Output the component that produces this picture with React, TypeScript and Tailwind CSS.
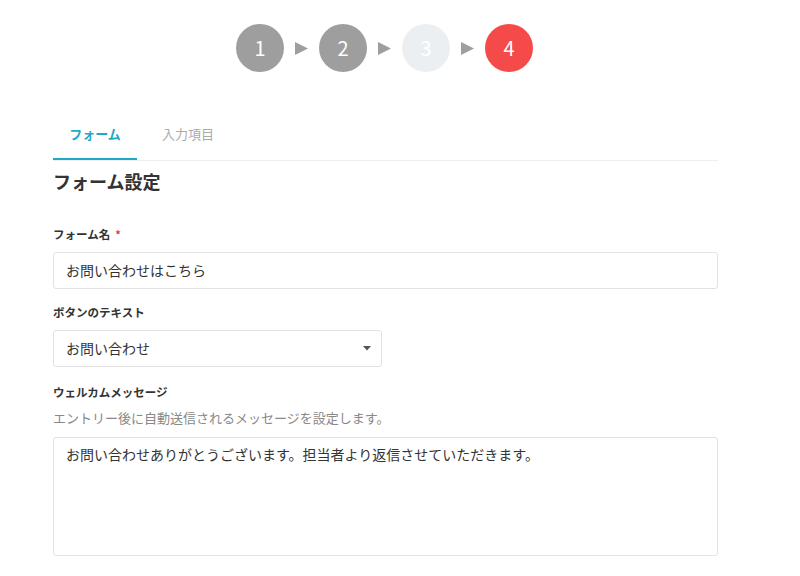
import { ChangeEvent, useState } from "react";

const font = { fontFamily: '"Noto Sans CJK JP", "Noto Sans", sans-serif' };

type StepState = "done" | "pending" | "current";

const steps: { label: string; state: StepState }[] = [
  { label: "1", state: "done" },
  { label: "2", state: "done" },
  { label: "3", state: "pending" },
  { label: "4", state: "current" },
];

function StepCircle({ label, state }: { label: string; state: StepState }) {
  const color =
    state === "current"
      ? "bg-[#f44a4a]"
      : state === "done"
      ? "bg-[#9e9e9e]"
      : "bg-[#eceff1]";
  return (
    <div
      className={`flex h-[48px] w-[48px] items-center justify-center rounded-full text-[20px] text-white ${color}`}
    >
      {label}
    </div>
  );
}

function Arrow() {
  return (
    <svg width="15" height="15" viewBox="0 0 15 15">
      <polygon points="1,1 14,7.5 1,14" fill="#9e9e9e" />
    </svg>
  );
}

function Label({ text, required }: { text: string; required?: boolean }) {
  return (
    <div className="flex items-center text-[11.5px] font-bold leading-none text-[#333]">
      {text}
      {required && <span className="ml-[5px] text-[11px] text-[#e53935]">*</span>}
    </div>
  );
}

export default function App() {
  const [activeTab, setActiveTab] = useState<string>("form");
  const [formName, setFormName] = useState<string>("お問い合わせはこちら");
  const [buttonText, setButtonText] = useState<string>("お問い合わせ");
  const [welcome, setWelcome] = useState<string>(
    "お問い合わせありがとうございます。担当者より返信させていただきます。"
  );

  return (
    <div className="min-h-[576px] bg-white text-[#333]" style={font}>
      <div className="ml-[53px] w-[665px]">
        <div className="flex items-center justify-center gap-[10px] pr-[2px] pt-[24px]">
          {steps.map((s, i) => (
            <div key={s.label} className="flex items-center gap-[10px]">
              {i > 0 && <Arrow />}
              <StepCircle label={s.label} state={s.state} />
            </div>
          ))}
        </div>

        <div className="mt-[43px] flex border-b border-[#eeeeee]">
          <button
            onClick={() => setActiveTab("form")}
            className={`h-[45px] w-[84px] border-b-2 pb-[6px] text-[13px] ${
              activeTab === "form"
                ? "border-[#1fa9c4] font-bold text-[#1fa9c4]"
                : "border-transparent text-[#aaa]"
            }`}
          >
            フォーム
          </button>
          <button
            onClick={() => setActiveTab("fields")}
            className={`ml-[8px] h-[45px] w-[86px] border-b-2 pb-[6px] text-[13px] ${
              activeTab === "fields"
                ? "border-[#1fa9c4] font-bold text-[#1fa9c4]"
                : "border-transparent text-[#aaa]"
            }`}
          >
            入力項目
          </button>
        </div>

        <h2 className="mt-[8px] text-[18px] font-bold leading-[24px] text-[#333]">
          フォーム設定
        </h2>

        <div className="mt-[36px]">
          <Label text="フォーム名" required />
          <input
            value={formName}
            onChange={(e: ChangeEvent<HTMLInputElement>) => setFormName(e.target.value)}
            className="mt-[11px] h-[37px] w-full rounded-[3px] border border-[#e2e2e2] px-[12px] text-[14px] text-[#333] outline-none"
          />
        </div>

        <div className="mt-[18px]">
          <Label text="ボタンのテキスト" />
          <div className="relative mt-[12px] w-[329px]">
            <select
              value={buttonText}
              onChange={(e: ChangeEvent<HTMLSelectElement>) => setButtonText(e.target.value)}
              className="h-[37px] w-full appearance-none rounded-[3px] border border-[#e2e2e2] bg-white px-[12px] text-[14px] text-[#333] outline-none"
            >
              <option>お問い合わせ</option>
              <option>送信する</option>
              <option>申し込む</option>
            </select>
            <svg
              className="pointer-events-none absolute right-[11px] top-[16px]"
              width="8"
              height="5"
              viewBox="0 0 8 5"
            >
              <polygon points="0,0 8,0 4,4.5" fill="#555" />
            </svg>
          </div>
        </div>

        <div className="mt-[20px]">
          <Label text="ウェルカムメッセージ" />
          <p className="mt-[12px] text-[13px] leading-none text-[#888]">
            エントリー後に自動送信されるメッセージを設定します。
          </p>
          <textarea
            value={welcome}
            onChange={(e: ChangeEvent<HTMLTextAreaElement>) => setWelcome(e.target.value)}
            className="mt-[13px] block h-[119px] w-full resize-none rounded-[3px] border border-[#e2e2e2] px-[12px] py-[6px] text-[14px] leading-[20px] text-[#333] outline-none"
          />
        </div>
      </div>
    </div>
  );
}
